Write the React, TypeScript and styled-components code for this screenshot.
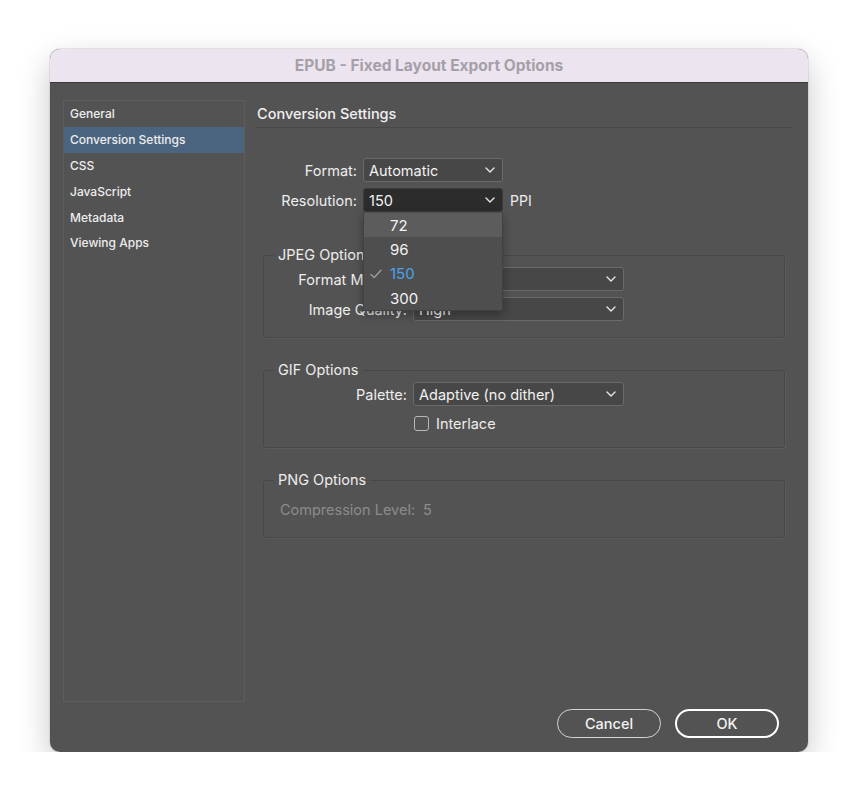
import { createGlobalStyle, styled } from "styled-components";

const GlobalStyle = createGlobalStyle`
  html, body {
    margin: 0;
    background: #ffffff;
    font-family: Inter, "Noto Sans", sans-serif;
  }
`;

const sections = ["General", "Conversion Settings", "CSS", "JavaScript", "Metadata", "Viewing Apps"];
const resolutions = ["72", "96", "150", "300"];

function Chevron() {
  return (
    <svg width="10" height="6" viewBox="0 0 10 6">
      <polyline points="1,1 5,5 9,1" fill="none" stroke="#e6e6e6" strokeWidth="1.4" strokeLinecap="round" strokeLinejoin="round" />
    </svg>
  );
}

function Check() {
  return (
    <svg width="12" height="10" viewBox="0 0 12 10">
      <polyline points="1,5.5 4.2,8.5 11,1.2" fill="none" stroke="#9a9a9a" strokeWidth="1.5" strokeLinecap="round" strokeLinejoin="round" />
    </svg>
  );
}

export default function App() {
  return (
    <>
      <GlobalStyle />
      <StyledWindow>
        <StyledTitleBar>EPUB - Fixed Layout Export Options</StyledTitleBar>
        <StyledBody>
          <StyledSidebar>
            {sections.map((s) => (
              <StyledNavItem key={s} $active={s === "Conversion Settings"}>
                {s}
              </StyledNavItem>
            ))}
          </StyledSidebar>
          <StyledMain>
            <StyledHeading>Conversion Settings</StyledHeading>
            <StyledTopForm>
              <StyledLabel>Format:</StyledLabel>
              <StyledSelect>
                <span>Automatic</span>
                <Chevron />
              </StyledSelect>
              <span />
              <StyledLabel>Resolution:</StyledLabel>
              <StyledSelectWrap>
                <StyledSelect $open>
                  <span>150</span>
                  <Chevron />
                </StyledSelect>
                <StyledMenu>
                  {resolutions.map((r) => (
                    <StyledMenuItem key={r} $hover={r === "72"} $checked={r === "150"}>
                      <StyledCheckSlot>{r === "150" && <Check />}</StyledCheckSlot>
                      {r}
                    </StyledMenuItem>
                  ))}
                </StyledMenu>
              </StyledSelectWrap>
              <StyledUnit>PPI</StyledUnit>
            </StyledTopForm>

            <StyledGroup $first $top={2} $bottom={16}>
              <legend>JPEG Options</legend>
              <StyledGroupForm>
                <StyledLabel>Format Method:</StyledLabel>
                <StyledSelect>
                  <span>Progressive</span>
                  <Chevron />
                </StyledSelect>
                <StyledLabel>Image Quality:</StyledLabel>
                <StyledSelect>
                  <span>High</span>
                  <Chevron />
                </StyledSelect>
              </StyledGroupForm>
            </StyledGroup>

            <StyledGroup $top={2} $bottom={14}>
              <legend>GIF Options</legend>
              <StyledGroupForm>
                <StyledLabel>Palette:</StyledLabel>
                <StyledSelect>
                  <span>Adaptive (no dither)</span>
                  <Chevron />
                </StyledSelect>
                <span />
                <StyledCheckRow>
                  <StyledCheckbox />
                  Interlace
                </StyledCheckRow>
              </StyledGroupForm>
            </StyledGroup>

            <StyledGroup $top={10} $bottom={17}>
              <legend>PNG Options</legend>
              <StyledMuted>
                Compression Level:<span>5</span>
              </StyledMuted>
            </StyledGroup>

            <StyledButtons>
              <StyledButton>Cancel</StyledButton>
              <StyledButton $primary>OK</StyledButton>
            </StyledButtons>
          </StyledMain>
        </StyledBody>
      </StyledWindow>
    </>
  );
}

const StyledWindow = styled.div`
  margin: 49px 0 0 50px;
  width: 758px;
  height: 703px;
  border-radius: 10px;
  overflow: hidden;
  display: flex;
  flex-direction: column;
  background: #535353;
  box-shadow: 0 0 0 1px rgba(0, 0, 0, 0.08), 0 12px 32px rgba(0, 0, 0, 0.22);
`;

const StyledTitleBar = styled.div`
  height: 34px;
  flex-shrink: 0;
  display: flex;
  align-items: center;
  justify-content: center;
  background: #ece4ef;
  border-bottom: 1px solid #3c3c3c;
  box-sizing: border-box;
  color: #a5a0a8;
  font-size: 15.5px;
  font-weight: 700;
`;

const StyledBody = styled.div`
  flex: 1;
  display: flex;
  gap: 12px;
  padding: 17px 17px 14px 13px;
`;

const StyledSidebar = styled.div`
  width: 182px;
  height: 602px;
  box-sizing: border-box;
  border: 1px solid #5d5d5d;
  flex-shrink: 0;
`;

const StyledNavItem = styled.div<{ $active?: boolean }>`
  height: 25.8px;
  display: flex;
  align-items: center;
  padding-left: 6px;
  font-size: 12px;
  font-weight: 500;
  color: #ededed;
  background: ${({ $active }) => ($active ? "#4b6581" : "transparent")};
`;

const StyledMain = styled.div`
  flex: 1;
  display: flex;
  flex-direction: column;
`;

const StyledHeading = styled.div`
  padding: 4px 0 3px;
  line-height: 20px;
  font-size: 14.5px;
  font-weight: 500;
  color: #f0f0f0;
  border-bottom: 1px solid #474747;
`;

const StyledTopForm = styled.div`
  margin-top: 30px;
  display: grid;
  grid-template-columns: 100px 140px auto;
  column-gap: 6px;
  row-gap: 6px;
  align-items: center;
`;

const StyledLabel = styled.span`
  text-align: right;
  font-size: 14.5px;
  color: #ededed;
  white-space: nowrap;
`;

const StyledSelectWrap = styled.div`
  position: relative;
`;

const StyledSelect = styled.div<{ $open?: boolean }>`
  height: 24px;
  box-sizing: border-box;
  display: flex;
  align-items: center;
  justify-content: space-between;
  padding: 0 7px 0 5px;
  border-radius: 3px;
  border: 1px solid ${({ $open }) => ($open ? "#3c3c3c" : "#6a6a6a")};
  background: ${({ $open }) => ($open ? "#2c2c2c" : "#474747")};
  font-size: 14.5px;
  color: #f2f2f2;
`;

const StyledUnit = styled.span`
  font-size: 14px;
  color: #ededed;
  padding-left: 1px;
`;

const StyledMenu = styled.div`
  position: absolute;
  top: 100%;
  left: 0;
  width: 140px;
  box-sizing: border-box;
  padding: 1px 0 0;
  background: #4e4e4e;
  border: 1px solid #414141;
  border-top: none;
  box-shadow: 0 4px 10px rgba(0, 0, 0, 0.3);
  z-index: 2;
`;

const StyledMenuItem = styled.div<{ $hover?: boolean; $checked?: boolean }>`
  height: 24.3px;
  display: flex;
  align-items: center;
  font-size: 15px;
  color: ${({ $checked }) => ($checked ? "#4aa4ec" : "#f2f2f2")};
  background: ${({ $hover }) => ($hover ? "#5c5c5c" : "transparent")};
`;

const StyledCheckSlot = styled.span`
  width: 26px;
  display: flex;
  justify-content: flex-end;
  padding-right: 8px;
  box-sizing: border-box;
`;

const StyledGroup = styled.fieldset<{ $first?: boolean; $top: number; $bottom: number }>`
  margin: ${({ $first }) => ($first ? 33 : 22)}px 6px 0;
  padding: ${({ $top }) => $top}px 0 ${({ $bottom }) => $bottom}px;
  border: 1px solid #474747;
  border-radius: 3px;
  box-shadow: 1px 1px 0 #5b5b5b;
  min-width: 0;

  & > legend {
    margin-left: 10px;
    padding: 0 4px;
    line-height: 20px;
    font-size: 14.5px;
    color: #ededed;
  }
`;

const StyledGroupForm = styled.div`
  display: grid;
  grid-template-columns: 143px 211px;
  column-gap: 6px;
  row-gap: 6px;
  align-items: center;
`;

const StyledCheckRow = styled.label`
  display: flex;
  align-items: center;
  gap: 7px;
  height: 19px;
  margin-top: 2px;
  padding-left: 1px;
  font-size: 14.5px;
  color: #ededed;
`;

const StyledCheckbox = styled.span`
  width: 13px;
  height: 13px;
  border: 1px solid #b8b8b8;
  border-radius: 3px;
`;

const StyledMuted = styled.div`
  padding-left: 16px;
  font-size: 14.5px;
  color: #8c8c8c;
  line-height: 20px;

  & > span {
    margin-left: 8px;
  }
`;

const StyledButtons = styled.div`
  margin-top: auto;
  display: flex;
  justify-content: flex-end;
  gap: 14px;
  padding-right: 12px;
`;

const StyledButton = styled.button<{ $primary?: boolean }>`
  width: 104px;
  height: 29px;
  border-radius: 15px;
  background: transparent;
  border: ${({ $primary }) => ($primary ? "2px solid #ffffff" : "1.5px solid #d4d4d4")};
  color: #f2f2f2;
  font-family: inherit;
  font-size: 14.5px;
  font-weight: 500;
`;
